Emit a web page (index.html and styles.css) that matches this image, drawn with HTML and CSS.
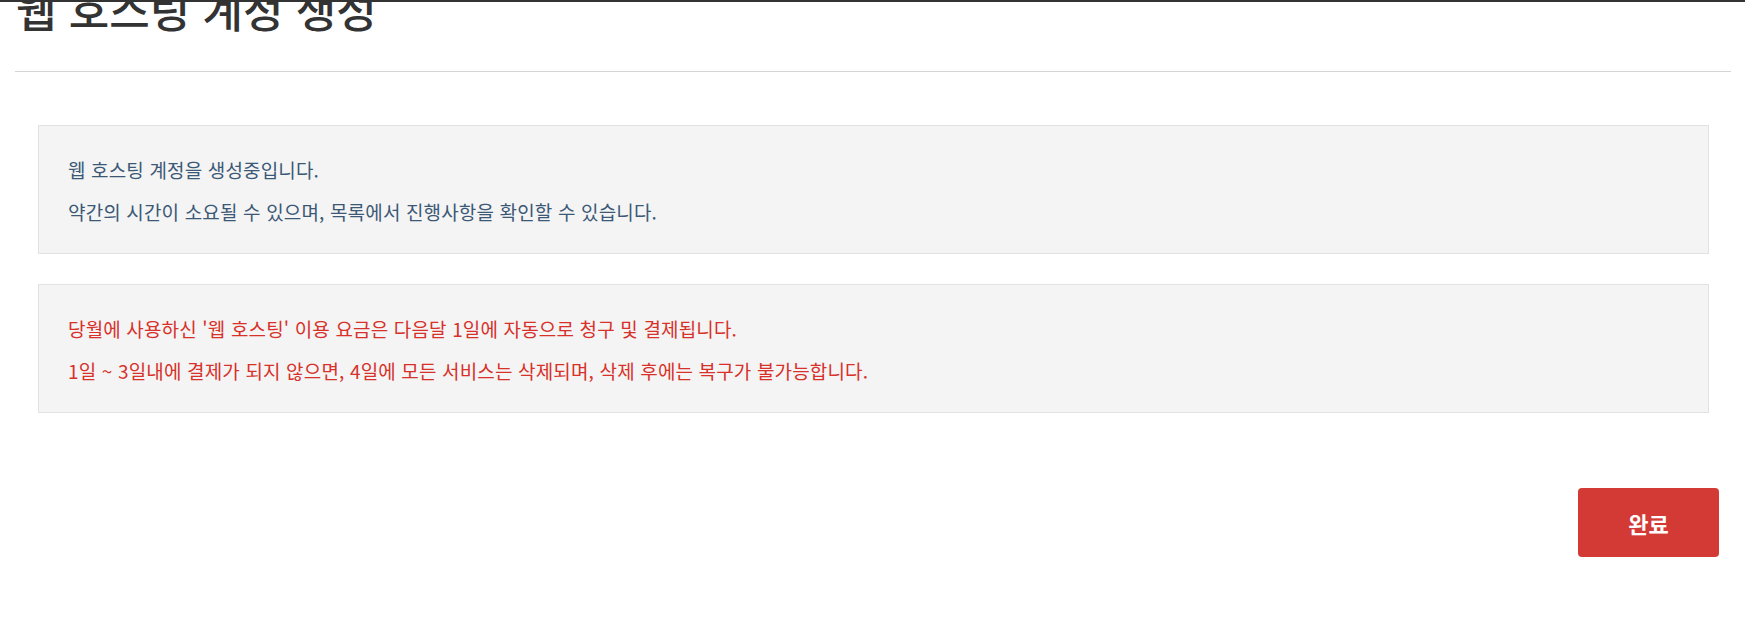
FILE: index.html
```html
<!DOCTYPE html>
<html lang="ko">
<head>
    <meta charset="UTF-8">
    <meta name="viewport" content="width=device-width, initial-scale=1.0">
    <title>웹 호스팅 계정 생성</title>
    <link rel="stylesheet" href="styles.css">
</head>
<body>

    <div class="top-line"></div>

    <div class="page">
        <div class="page-header">
            <h1>웹 호스팅 계정 생성</h1>
        </div>

        <div class="content">
            <div class="notice notice-info">
                <p>웹 호스팅 계정을 생성중입니다.</p>
                <p>약간의 시간이 소요될 수 있으며, 목록에서 진행사항을 확인할 수 있습니다.</p>
            </div>

            <div class="notice notice-warn">
                <p>당월에 사용하신 '웹 호스팅' 이용 요금은 다음달 1일에 자동으로 청구 및 결제됩니다.</p>
                <p>1일 ~ 3일내에 결제가 되지 않으면, 4일에 모든 서비스는 삭제되며, 삭제 후에는 복구가 불가능합니다.</p>
            </div>
        </div>

        <div class="actions">
            <button type="button" class="btn-done">완료</button>
        </div>
    </div>

</body>
</html>
```

FILE: styles.css
```css
body {
    margin: 0;
    font-family: "Noto Sans CJK KR", "Noto Sans", sans-serif;
    background-color: #fff;
    color: #333;
}
.top-line {
    height: 2px;
    background-color: #333;
}
.page {
    padding: 0 14px 0 15px;
}
.page-header {
    padding-bottom: 39px;
    border-bottom: 1px solid #d5d5d5;
}
h1 {
    margin: -16px 0 0 1px;
    font-size: 44px;
    line-height: 46px;
    font-weight: 500;
    color: #333;
}
.content {
    padding: 53px 22px 0 23px;
}
.notice {
    padding: 16px 29px 13px;
    background-color: #f4f4f4;
    border: 1px solid #e2e2e2;
    margin-bottom: 30px;
}
.notice p {
    margin: 14px 0;
    font-size: 19px;
    line-height: 28px;
    letter-spacing: 0.15px;
}
.notice-info p {
    color: #3b5876;
}
.notice-warn p {
    color: #d7312a;
}
.actions {
    display: flex;
    justify-content: flex-end;
    padding: 45px 12px 0 0;
}
.btn-done {
    width: 141px;
    height: 69px;
    background-color: #d33a35;
    color: white;
    border: none;
    border-radius: 4px;
    font-family: "Noto Sans CJK KR", sans-serif;
    font-size: 22px;
    font-weight: 700;
    cursor: pointer;
}
.btn-done:hover {
    background-color: #bf302b;
}
```
